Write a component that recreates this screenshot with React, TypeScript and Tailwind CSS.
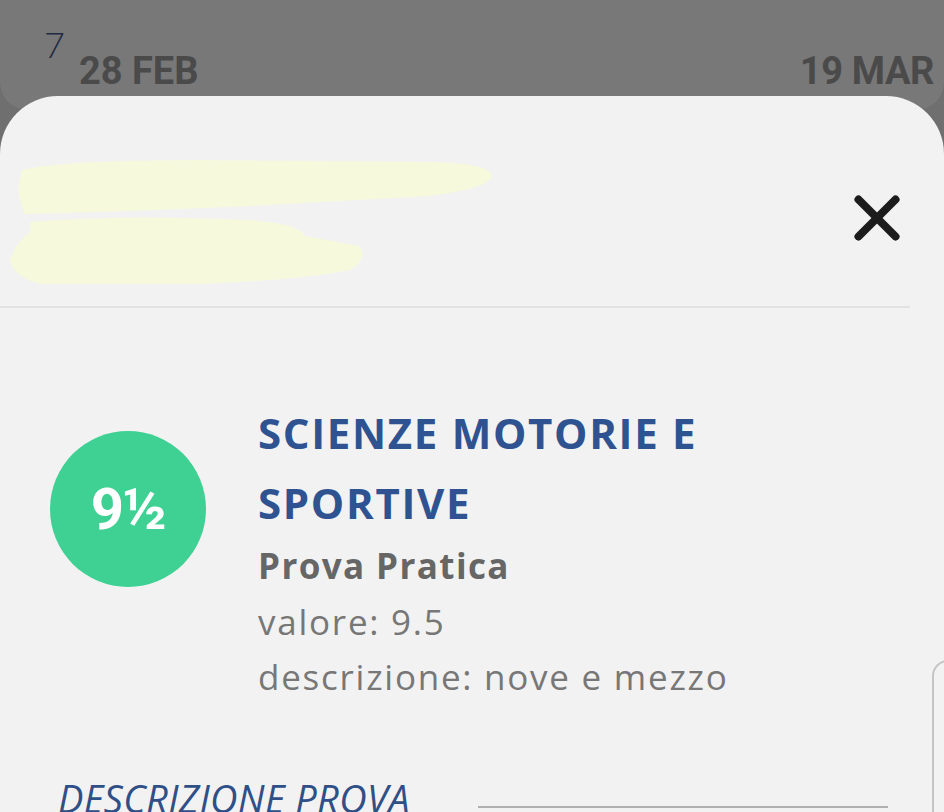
import { X } from 'lucide-react';

const sans = { fontFamily: '"Open Sans", "Noto Sans", sans-serif' };
const roboto = { fontFamily: 'Roboto, "Open Sans", sans-serif' };

function Scribble() {
  return (
    <svg width="500" height="140" viewBox="0 0 500 140" className="block">
      <path
        d="M22 24 Q60 14 200 14 L440 16 Q490 18 492 30 Q490 42 430 50 L250 60 Q120 66 25 68 Q14 46 22 24 Z"
        fill="#f6f9dc"
      />
      <path
        d="M30 76 Q120 68 250 74 Q300 78 305 90 L360 100 Q368 114 350 124 Q300 134 200 138 L40 138 Q12 130 10 114 Q16 96 30 86 Z"
        fill="#f6f9dc"
      />
    </svg>
  );
}

export default function App() {
  return (
    <div className="h-[812px] w-[944px] overflow-hidden bg-[#6f6f6f]" style={sans}>
      {/* background header */}
      <div className="h-[110px] bg-[#787878] rounded-b-[28px] relative">
        <div className="flex items-start pl-[44px] pr-[10px] pt-[26px]">
          <span className="text-[36px] leading-none font-light text-[#1f2a44] mr-[14px]" style={{ fontFamily: 'Lato, sans-serif' }}>
            7
          </span>
          <span className="mt-[26px] text-[38px] leading-none font-bold text-[#4a4a4a]" style={roboto}>
            28 FEB
          </span>
          <span className="ml-auto mt-[26px] text-[38px] leading-none font-bold text-[#4a4a4a] tracking-[-0.01em]" style={roboto}>
            19 MAR
          </span>
        </div>
      </div>

      {/* sheet */}
      <div className="-mt-[14px] relative h-[740px] bg-[#f2f2f2] rounded-t-[58px]">
        <div className="flex items-center h-[212px] mr-[34px] border-b-2 border-[#e2e2e2]">
          <div className="pt-[30px]">
            <Scribble />
          </div>
          <button className="ml-auto -mr-[4px] mt-[34px]">
            <X size={74} strokeWidth={2.6} color="#1c1c1c" />
          </button>
        </div>

        <div className="flex items-start pl-[50px] pt-[90px]">
          <div className="mt-[33px] w-[156px] h-[156px] shrink-0 rounded-full bg-[#3fd093] flex items-center justify-center text-white font-bold text-[58px] tracking-tight" style={roboto}>
            9½
          </div>
          <div className="ml-[52px]">
            <h2 className="text-[42px] leading-[70px] font-bold text-[#2f5391] tracking-[0.04em]">
              SCIENZE MOTORIE E<br />SPORTIVE
            </h2>
            <p className="text-[35px] leading-[56px] font-bold text-[#666666] tracking-[0.04em]">Prova Pratica</p>
            <p className="text-[35px] leading-[55px] text-[#777777] tracking-[0.05em]">valore: 9.5</p>
            <p className="text-[35px] leading-[55px] text-[#777777] tracking-[0.05em]">descrizione: nove e mezzo</p>
          </div>
        </div>

        <div className="flex items-start pl-[58px] pr-[56px] pt-[70px]">
          <span className="italic text-[38px] leading-[48px] text-[#2f4f87] tracking-[0.01em] whitespace-nowrap">DESCRIZIONE PROVA</span>
          <div className="flex-1 ml-[68px] mt-[32px] h-[2px] bg-[#b0b0b0]" />
        </div>

        <div className="absolute left-[932px] top-[564px] w-[30px] h-[300px] rounded-tl-[16px] border-l-2 border-t-2 border-[#c4c4c4]" />
      </div>
    </div>
  );
}
